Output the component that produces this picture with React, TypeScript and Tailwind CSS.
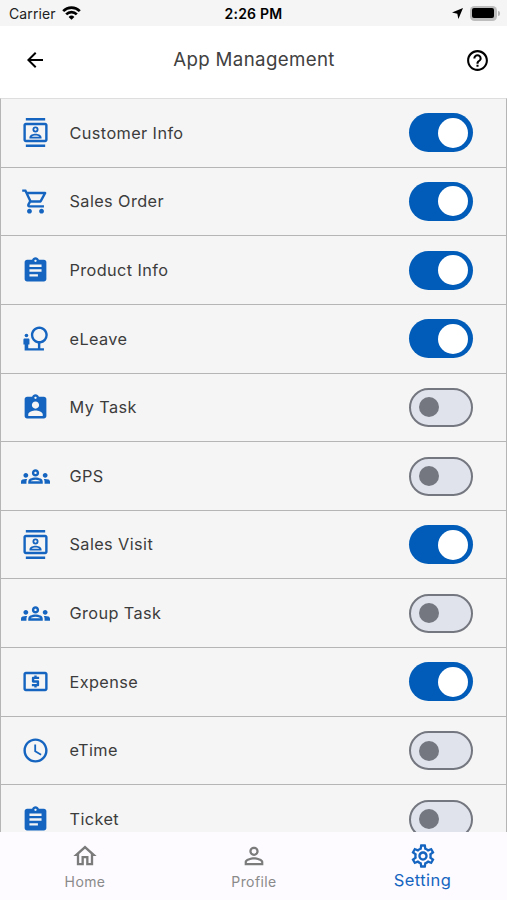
import React, { useState } from 'react';
import { IconType } from 'react-icons';
import {
  MdAccessTime,
  MdArrowBack,
  MdAssignment,
  MdAssignmentInd,
  MdHelpOutline,
  MdOutlineContacts,
  MdOutlineGroups,
  MdOutlineHome,
  MdOutlineLocalAtm,
  MdOutlineNaturePeople,
  MdOutlineSettings,
  MdOutlineShoppingCart,
  MdPersonOutline,
} from 'react-icons/md';

interface AppItem {
  name: string;
  icon: IconType;
  enabled: boolean;
}

const APPS: AppItem[] = [
  { name: 'Customer Info', icon: MdOutlineContacts, enabled: true },
  { name: 'Sales Order', icon: MdOutlineShoppingCart, enabled: true },
  { name: 'Product Info', icon: MdAssignment, enabled: true },
  { name: 'eLeave', icon: MdOutlineNaturePeople, enabled: true },
  { name: 'My Task', icon: MdAssignmentInd, enabled: false },
  { name: 'GPS', icon: MdOutlineGroups, enabled: false },
  { name: 'Sales Visit', icon: MdOutlineContacts, enabled: true },
  { name: 'Group Task', icon: MdOutlineGroups, enabled: false },
  { name: 'Expense', icon: MdOutlineLocalAtm, enabled: true },
  { name: 'eTime', icon: MdAccessTime, enabled: false },
  { name: 'Ticket', icon: MdAssignment, enabled: false },
];

function StatusBar() {
  return (
    <div className="grid h-[26px] shrink-0 grid-cols-3 items-center bg-[#f5f5f5] px-[7px] text-black">
      <div className="flex items-center gap-[6px] pl-[2px]">
        <span className="text-[14px] tracking-[0.1px] text-[#222]">Carrier</span>
        <svg width="19" height="14" viewBox="0 0 19 14" fill="none" stroke="currentColor" strokeWidth="2.7">
          <path d="M1.2 5.1a11.8 11.8 0 0 1 16.6 0" />
          <path d="M4.2 8.4a7.5 7.5 0 0 1 10.6 0" />
          <path d="M9.5 13.8 6.6 10.9a4.1 4.1 0 0 1 5.8 0z" fill="currentColor" stroke="none" />
        </svg>
      </div>
      <span className="pt-px text-center text-[14px] font-semibold tracking-[0.2px]">2:26 PM</span>
      <div className="flex items-center justify-end gap-[7px]">
        {/* Location arrow */}
        <svg width="11" height="11" viewBox="0 0 11 11" className="mt-px">
          <path d="M11 0 6.4 11 5.3 5.7 0 4.6z" fill="currentColor" />
        </svg>
        <div className="flex items-center gap-px">
          <div className="h-[15px] w-[27px] rounded-[4.5px] bg-[#bdbdbd] p-[2.5px]">
            <div className="h-full rounded-[2px] bg-black" />
          </div>
          <div className="h-[5px] w-[2px] rounded-r-full bg-[#b3b3b3]" />
        </div>
      </div>
    </div>
  );
}

function Toggle({ on, label, onClick }: { on: boolean; label: string; onClick: () => void }) {
  return (
    <button
      role="switch"
      aria-checked={on}
      aria-label={label}
      onClick={onClick}
      className={`flex h-[39px] w-[64px] shrink-0 items-center rounded-full ${
        on ? 'justify-end bg-[#005cb8] pr-[5px]' : 'border-[2.5px] border-[#74777f] bg-[#e0e2ec] pl-[7.5px]'
      }`}
    >
      <span className={on ? 'size-[30px] rounded-full bg-white' : 'size-[20px] rounded-full bg-[#74777f]'} />
    </button>
  );
}

export default function App() {
  const [apps, setApps] = useState(APPS);

  const toggle = (index: number) =>
    setApps(apps.map((app, i) => (i === index ? { ...app, enabled: !app.enabled } : app)));

  return (
    <div className="flex h-[900px] w-[507px] flex-col overflow-hidden bg-white font-['Inter',sans-serif]">
      <StatusBar />

      {/* Header */}
      <header className="grid h-[72px] shrink-0 grid-cols-[1fr_auto_1fr] items-center pr-[17px] pb-[4px] pl-[23px]">
        <MdArrowBack size={24} className="text-black" />
        <h1 className="-ml-[5px] pt-px text-[18.7px] tracking-[0.35px] text-[#414141]">App Management</h1>
        <MdHelpOutline size={25} className="justify-self-end text-black" />
      </header>

      {/* App list */}
      <main className="min-h-0 flex-1 overflow-hidden border-x border-t border-x-[#b5b5b5] border-t-[#dedede] bg-[#f5f5f5]">
        {apps.map((app, i) => (
          <div
            key={app.name}
            className="flex h-[68.65px] items-center border-b border-[#b5b5b5] pr-[33px] pl-[19.5px]"
          >
            <app.icon size={29} className="shrink-0 text-[#1565c0]" />
            <span className="ml-[20px] flex-1 text-[16.3px] tracking-[0.4px] text-[#3c3c3c]">{app.name}</span>
            <Toggle on={app.enabled} label={app.name} onClick={() => toggle(i)} />
          </div>
        ))}
      </main>

      {/* Bottom navigation */}
      <nav className="grid h-[68px] shrink-0 grid-cols-3 bg-[#fdfbff] text-[#7b7b7b]">
        <a className="flex flex-col items-center pt-[10px] pl-px">
          <MdOutlineHome size={28} />
          <span className="mt-[2px] text-[14px] leading-5 tracking-[0.4px] text-[#8a8a8a]">Home</span>
        </a>
        <a className="flex flex-col items-center pt-[10px] pl-px">
          <MdPersonOutline size={28} />
          <span className="mt-[2px] text-[14px] leading-5 tracking-[0.4px] text-[#8a8a8a]">Profile</span>
        </a>
        <a className="flex flex-col items-center pt-[10px] text-[#1565c0]">
          <MdOutlineSettings size={28} />
          <span className="text-[16.5px] leading-5 tracking-[0.45px]">Setting</span>
        </a>
      </nav>
    </div>
  );
}
